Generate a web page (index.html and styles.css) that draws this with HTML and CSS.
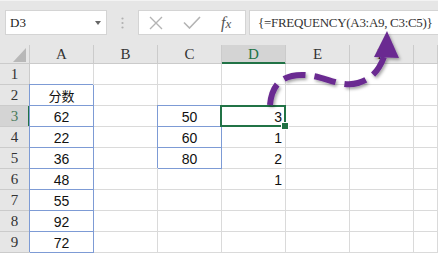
FILE: index.html
```html
<!DOCTYPE html>
<html>
<head>
	<title>FREQUENCY</title>
	<link rel="stylesheet" href="styles.css">
</head>
<body>
	<div class="toolbar">
		<div class="namebox">
			<span>D3</span>
			<svg width="6" height="4" viewBox="0 0 6 4"><polygon points="0,0 6,0 3,4" fill="#666"/></svg>
		</div>
		<div class="grip">
			<svg width="3" height="12" viewBox="0 0 3 12">
				<circle cx="1.5" cy="1.5" r="1.1" fill="#b0b0b0"/>
				<circle cx="1.5" cy="6" r="1.1" fill="#b0b0b0"/>
				<circle cx="1.5" cy="10.5" r="1.1" fill="#b0b0b0"/>
			</svg>
		</div>
		<div class="fbuttons">
			<svg class="cancel" width="14" height="14" viewBox="0 0 14 14">
				<path d="M1 1 L13 13 M13 1 L1 13" stroke="#b4b4b4" stroke-width="1.4" fill="none"/>
			</svg>
			<svg class="ok" width="18" height="13" viewBox="0 0 18 13">
				<path d="M1 6.5 L6.5 12 L17 1" stroke="#b4b4b4" stroke-width="1.6" fill="none"/>
			</svg>
			<span class="fx">f<span>x</span></span>
		</div>
		<div class="formula">{=FREQUENCY(A3:A9, C3:C5)}</div>
	</div>

	<div class="sheet">
		<div class="c h corner">
			<svg width="29" height="18" viewBox="0 0 29 18"><polygon points="26,3 26,17 13,17" fill="#b8b8b8"/></svg>
		</div>
		<div class="c h">A</div>
		<div class="c h">B</div>
		<div class="c h">C</div>
		<div class="c h active-col">D</div>
		<div class="c h">E</div>
		<div class="c h">F</div>
		<div class="c h"></div>

		<div class="c h">1</div>
		<div class="c"></div><div class="c"></div><div class="c"></div><div class="c"></div><div class="c"></div><div class="c"></div><div class="c"></div>

		<div class="c h">2</div>
		<div class="c blue cjk">分数</div>
		<div class="c"></div><div class="c"></div><div class="c"></div><div class="c"></div><div class="c"></div><div class="c"></div>

		<div class="c h active-row">3</div>
		<div class="c blue">62</div>
		<div class="c"></div>
		<div class="c blue">50</div>
		<div class="c num sel">3</div>
		<div class="c"></div><div class="c"></div><div class="c"></div>

		<div class="c h">4</div>
		<div class="c blue">22</div>
		<div class="c"></div>
		<div class="c blue">60</div>
		<div class="c num">1</div>
		<div class="c"></div><div class="c"></div><div class="c"></div>

		<div class="c h">5</div>
		<div class="c blue">36</div>
		<div class="c"></div>
		<div class="c blue">80</div>
		<div class="c num">2</div>
		<div class="c"></div><div class="c"></div><div class="c"></div>

		<div class="c h">6</div>
		<div class="c blue">48</div>
		<div class="c"></div>
		<div class="c"></div>
		<div class="c num">1</div>
		<div class="c"></div><div class="c"></div><div class="c"></div>

		<div class="c h">7</div>
		<div class="c blue">55</div>
		<div class="c"></div><div class="c"></div><div class="c"></div><div class="c"></div><div class="c"></div><div class="c"></div>

		<div class="c h">8</div>
		<div class="c blue">92</div>
		<div class="c"></div><div class="c"></div><div class="c"></div><div class="c"></div><div class="c"></div><div class="c"></div>

		<div class="c h">9</div>
		<div class="c blue">72</div>
		<div class="c"></div><div class="c"></div><div class="c"></div><div class="c"></div><div class="c"></div><div class="c"></div>
	</div>

	<!-- dashed arrow pointing from D3 to the formula -->
	<svg class="arrow" width="438" height="254" viewBox="0 0 438 254">
		<defs>
			<filter id="shadow" x="-10%" y="-10%" width="130%" height="130%">
				<feDropShadow dx="1.5" dy="2" stdDeviation="1.4" flood-color="#000" flood-opacity="0.35"/>
			</filter>
		</defs>
		<g filter="url(#shadow)">
			<path d="M270 105 C272 82 285 74 305 75 C325 76 340 88 358 83 C372 79 379 70 384 57"
				stroke="#6a2c91" stroke-width="6" fill="none" stroke-dasharray="22 9"/>
			<polygon points="387,31 374,57 399,58" fill="#6a2c91"/>
		</g>
	</svg>
</body>
</html>
```

FILE: styles.css
```css
* {
	box-sizing: border-box;
}

body {
	margin: 0;
	width: 438px;
	height: 254px;
	overflow: hidden;
	position: relative;
	background: #fff;
	font-family: "Liberation Sans", Arial, sans-serif;
}

.toolbar {
	height: 45px;
	background: #e6e6e6;
	border-top: 1px solid #f3f3f3;
	display: flex;
	align-items: flex-start;
	padding: 9px 0 0 5px;
}

.namebox {
	width: 102px;
	height: 25px;
	background: #fff;
	border: 1px solid #d4d4d4;
	display: flex;
	align-items: center;
	justify-content: space-between;
	padding: 0 5px 0 4px;
	font-family: "Liberation Serif", serif;
	font-size: 13px;
	color: #222;
}

.grip {
	width: 31px;
	height: 25px;
	display: flex;
	align-items: center;
	justify-content: center;
}

.fbuttons {
	width: 108px;
	height: 25px;
	background: #fff;
	border: 1px solid #d4d4d4;
	display: flex;
	align-items: center;
	padding-left: 10px;
}

.fbuttons .ok {
	margin-left: 20px;
}

.fx {
	margin-left: 20px;
	font-family: "Liberation Serif", serif;
	font-style: italic;
	font-size: 16px;
	color: #555;
}

.fx span {
	font-size: 13px;
}

.formula {
	flex: 1;
	height: 25px;
	margin-left: 3px;
	background: #fff;
	border: 1px solid #d4d4d4;
	border-right: none;
	padding-left: 8px;
	font-family: "Liberation Serif", serif;
	font-size: 13px;
	letter-spacing: -0.3px;
	line-height: 23px;
	color: #333;
	white-space: nowrap;
}

.sheet {
	display: grid;
	grid-template-columns: 30px repeat(6, 64px) 24px;
	grid-template-rows: 19px repeat(9, 21px);
}

.c {
	background: #fff;
	border-right: 1px solid #dadada;
	border-bottom: 1px solid #dadada;
	display: flex;
	align-items: center;
	justify-content: center;
	font-size: 14px;
	color: #111;
	padding-top: 1px;
}

.h {
	background: #e6e6e6;
	border-color: #cbcbcb;
	font-family: "Liberation Serif", serif;
	font-size: 15px;
	color: #333;
}

.corner {
	padding: 0;
	align-items: flex-start;
	justify-content: flex-start;
}

.active-col {
	background: #d4d4d4;
	color: #217346;
	border-bottom-color: #217346;
	box-shadow: inset 0 -1px 0 #217346;
}

.active-row {
	background: #d4d4d4;
	color: #4a7a5a;
	border-right-color: #217346;
	box-shadow: inset -1px 0 0 #217346;
}

.blue {
	border-color: #7d9bd5;
	box-shadow: -1px -1px 0 #7d9bd5;
}

.cjk {
	font-family: "Noto Sans CJK SC", sans-serif;
	font-size: 13px;
}

.num {
	justify-content: flex-end;
	padding-right: 3px;
}

.sel {
	position: relative;
}

.sel::after {
	content: "";
	position: absolute;
	top: -1px;
	left: -2px;
	right: -1px;
	bottom: -1px;
	border: 2px solid #217346;
}

.sel::before {
	content: "";
	position: absolute;
	right: -4px;
	bottom: -4px;
	width: 6px;
	height: 6px;
	background: #217346;
	border: 1px solid #fff;
	z-index: 1;
}

.arrow {
	position: absolute;
	left: 0;
	top: 0;
	pointer-events: none;
}
```
